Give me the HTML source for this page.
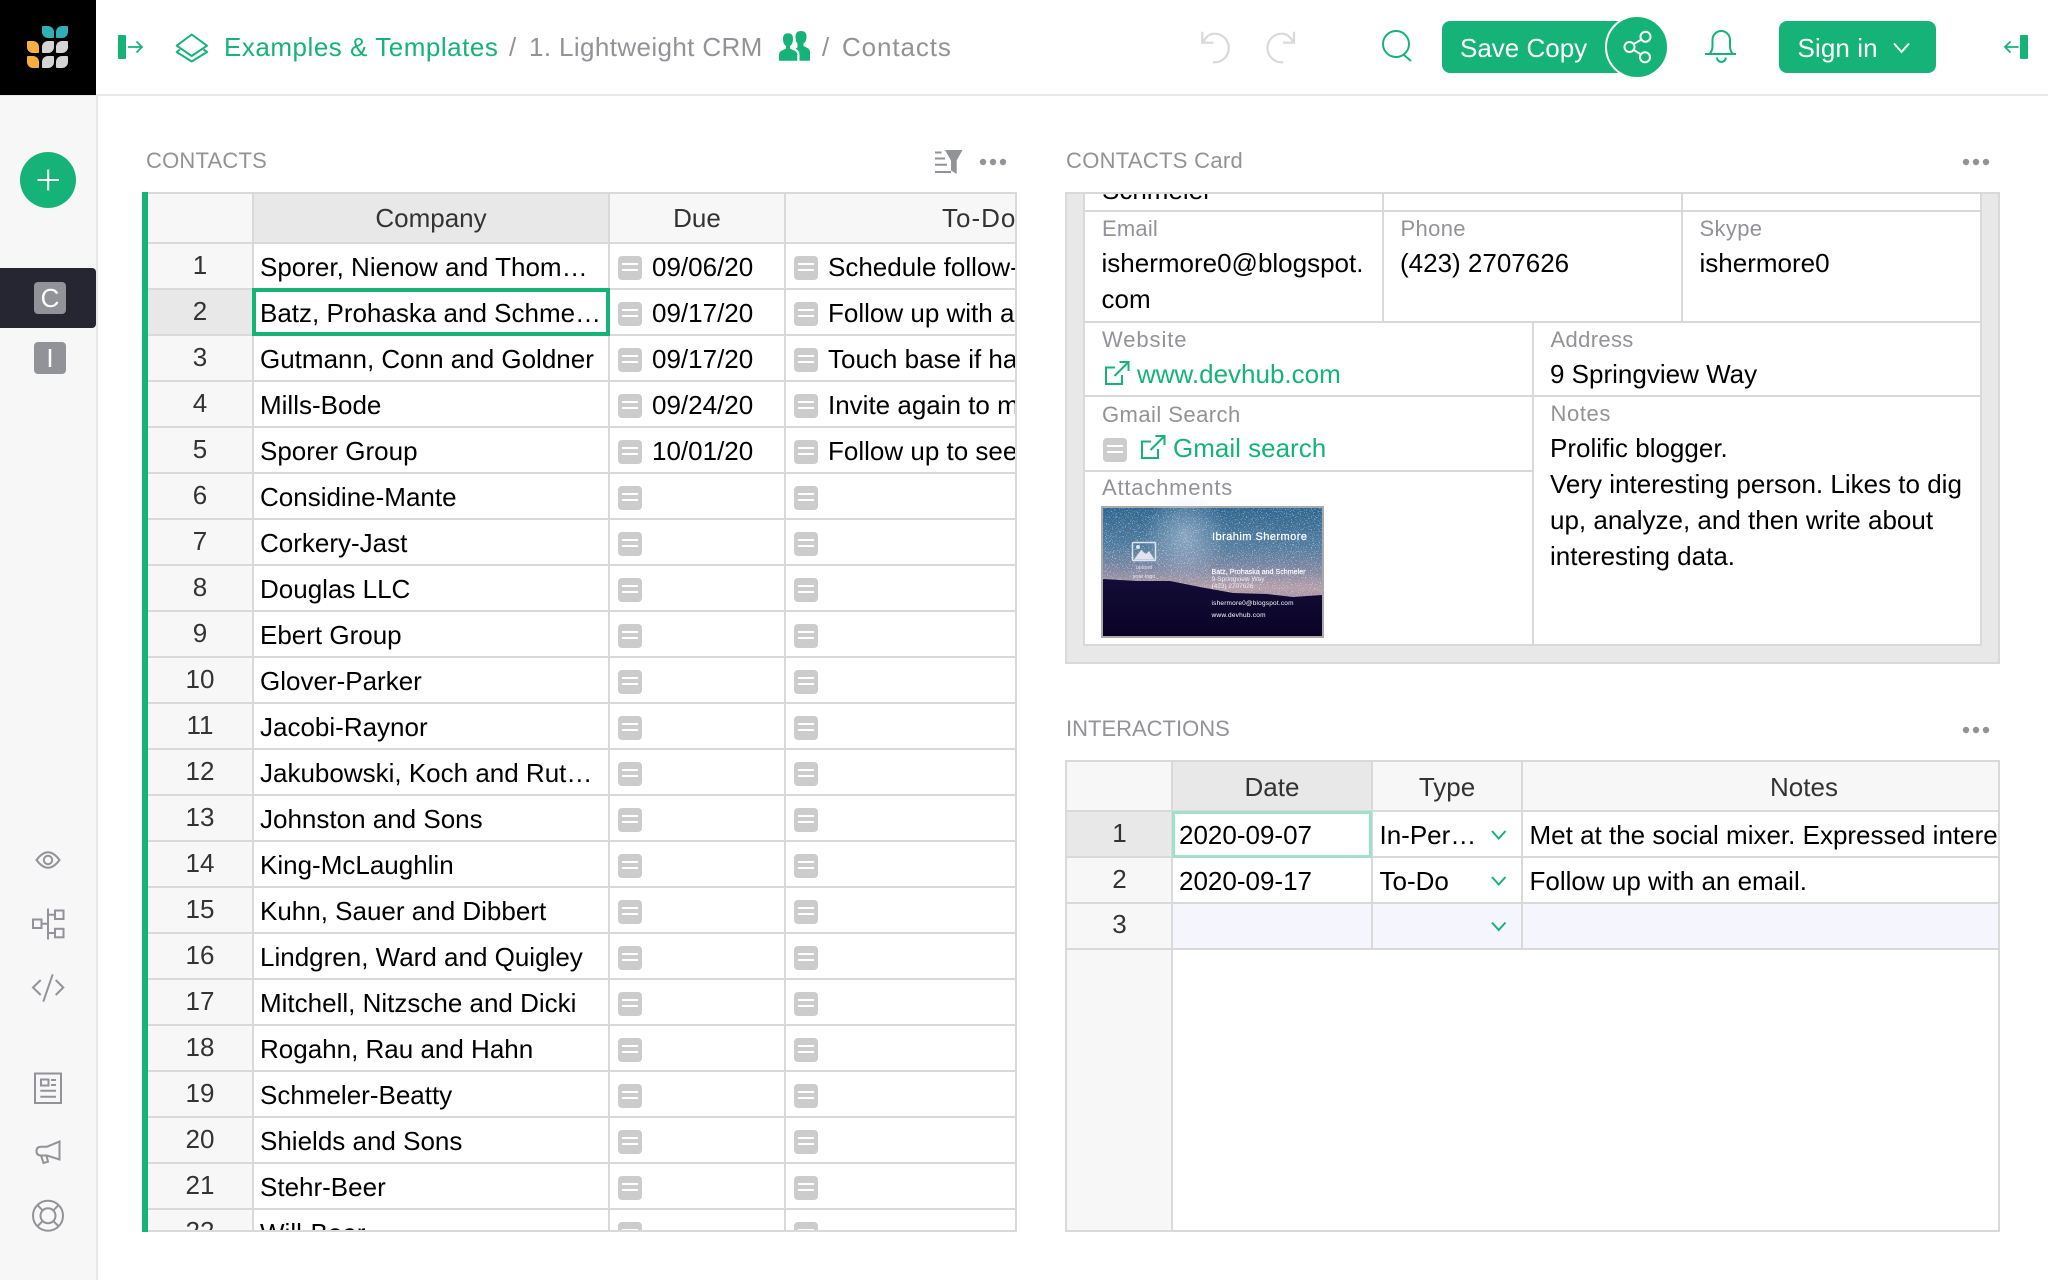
<!DOCTYPE html>
<html lang="en"><head><meta charset="utf-8"><title>Contacts</title>
<style>
*{box-sizing:border-box}
html,body{margin:0;padding:0;width:2048px;height:1280px;overflow:hidden;background:#fff;font-family:"Liberation Sans",Arial,sans-serif;color:#000}
#a{position:absolute;left:0;top:0;width:2048px;height:1280px;overflow:hidden}
.abs,.t,.l,.h,.v{position:absolute}
.t{font-size:26px;line-height:36px;white-space:nowrap}
.g{color:#16b378}.m{color:#929299}
.lb{font-size:22px;color:#929299;letter-spacing:.35px}
.h{background:#d9d9d9;height:2px}
.v{background:#d9d9d9;width:2px}
svg{position:absolute;left:0;top:0;overflow:visible}
#tb{position:absolute;left:148px;top:194px;width:869px;height:1038px;overflow:hidden}
.r{display:block;position:relative;height:46px;width:869px;border-bottom:2px solid #d9d9d9;font-size:26px;line-height:46px;white-space:nowrap}
.r b,.r u,.r i,.hd b,.hd u,.hd i{position:absolute;top:0;bottom:0;font-weight:400;font-style:normal;text-decoration:none;overflow:hidden;display:block}
.r b{left:0;width:106px;background:#f7f7f7;border-right:2px solid #d9d9d9;text-align:center;color:#333;line-height:43px}
.r u{left:106px;width:356px;padding-left:6px;border-right:2px solid #d9d9d9}
.r i.d{left:462px;width:176px;padding-left:42px;border-right:2px solid #d9d9d9}
.r i.e{left:638px;width:229px;padding-left:42px}
.r s{position:absolute;top:12px;left:8px;width:24px;height:24px;border-radius:4px;background:linear-gradient(#fff,#fff) center 7px/16px 2px no-repeat,linear-gradient(#fff,#fff) center 13px/16px 2px no-repeat,#ccc}
.r i.e s{left:8px}
.w{position:absolute;width:24px;height:24px;border-radius:4px;background:linear-gradient(#fff,#fff) center 7px/16px 2px no-repeat,linear-gradient(#fff,#fff) center 13px/16px 2px no-repeat,#ccc}
.hd{position:relative;height:50px;width:869px;background:#f7f7f7;border-bottom:2px solid #d9d9d9;font-size:26px;line-height:49px;color:#333;white-space:nowrap}
.hd b{left:0;width:106px;border-right:2px solid #d9d9d9}
.hd u{left:106px;width:356px;background:#e8e8e8;border-right:2px solid #d9d9d9;text-align:center}
.hd i.d{left:462px;width:176px;border-right:2px solid #d9d9d9;text-align:center}
.hd i.e{left:794px;letter-spacing:1px}
.lg{position:absolute;width:12px;height:12px}
</style></head><body><div id="a">

<!-- chrome -->
<div class="abs" style="left:0;top:95px;width:96px;height:1185px;background:#f7f7f7"></div>
<div class="abs" style="left:96px;top:95px;width:2px;height:1185px;background:#e8e8e8"></div>
<div class="abs" style="left:0;top:94px;width:2048px;height:2px;background:#e8e8e8"></div>
<div class="abs" style="left:0;top:0;width:96px;height:95px;background:#000"></div>
<div class="lg" style="left:41.5px;top:26px;background:#2fb0b5;border-radius:1px 6px 1px 6px"></div>
<div class="lg" style="left:56px;top:26px;background:#2fb0b5;border-radius:6px 1px 6px 1px"></div>
<div class="lg" style="left:27px;top:41px;background:#f9ae41;border-radius:1px 6px 1px 6px"></div>
<div class="lg" style="left:41.5px;top:41px;background:#d5d5d5;border-radius:6px 1px 6px 1px"></div>
<div class="lg" style="left:56px;top:41px;background:#d5d5d5;border-radius:6px 1px 6px 1px"></div>
<div class="lg" style="left:27px;top:55.5px;background:#f9ae41;border-radius:1px 6px 1px 6px"></div>
<div class="lg" style="left:41.5px;top:55.5px;background:#d5d5d5;border-radius:6px 1px 6px 1px"></div>
<div class="lg" style="left:56px;top:55.5px;background:#d5d5d5;border-radius:6px 1px 6px 1px"></div>

<div class="abs" style="left:20px;top:152px;width:56px;height:56px;border-radius:50%;background:#16b378"></div>
<div class="abs" style="left:0;top:268px;width:96px;height:60px;background:#262633;border-radius:0 4px 4px 0"></div>
<div class="abs" style="left:34px;top:282px;width:32px;height:32px;background:#929299;border-radius:4px"></div>
<div class="abs" style="left:34px;top:342px;width:32px;height:32px;background:#929299;border-radius:4px"></div>
<div class="t" style="left:34px;width:32px;text-align:center;top:280px;color:#fff">C</div>
<div class="t" style="left:34px;width:32px;text-align:center;top:340px;color:#fff">I</div>

<svg width="2048" height="1280" viewBox="0 0 2048 1280" fill="none">
 <!-- plus -->
 <path d="M37.5 180H59M48.2 169.5V190.5" stroke="#fff" stroke-width="2"/>
 <!-- header left -->
 <rect x="118" y="35" width="8" height="24" rx="1" fill="#16b378"/>
 <path d="M128 47H141.5M136.5 41.5L142 47L136.5 52.5" stroke="#16b378" stroke-width="1.8"/>
 <path d="M191.7 34.5L207 45.7L191.7 56L176.7 45.7Z" stroke="#16b378" stroke-width="2" stroke-linejoin="round"/>
 <path d="M180 49.5L176.7 52L191.7 61.5L207 52L203.5 49.5" stroke="#16b378" stroke-width="2" stroke-linejoin="round"/>
 <!-- people -->
 <path d="M779 60.7V54.5Q779 51.5 783 50L786 48.5V46Q783 44 783 39Q783 33.3 788 33.3Q793 33.3 793 39Q793 44 790 46V48.5L793 50Q797.3 51.5 797.3 54.5V60.7Z" fill="#16b378"/>
 <path d="M795.5 36.5Q795.5 31 801 31Q806.5 31 806.5 36.5Q806.5 41.5 803.5 43.5V46L806.5 47.5Q810 49 810 52V60.7H799.5V54.5Q799.5 50.5 795.5 48.5L797.5 47.5V43.5Q795.5 41.5 795.5 36.5Z" fill="#16b378"/>
 <!-- undo / redo -->
 <g stroke="#d9d9d9" stroke-width="2.2">
  <path d="M1202.3 31.7V42.7H1213.3"/>
  <path d="M1203.5 41.5C1206.5 36 1210 33.7 1214.5 33.7A14.3 14.3 0 0 1 1214.5 62.3H1213"/>
  <path d="M1294 31.7V42.7H1283"/>
  <path d="M1292.8 41.5C1289.8 36 1286.3 33.7 1281.8 33.7A14.3 14.3 0 0 0 1281.8 62.3H1283.3"/>
 </g>
 <!-- search -->
 <circle cx="1396" cy="44" r="13" stroke="#16b378" stroke-width="2"/>
 <path d="M1404 55L1411 61" stroke="#16b378" stroke-width="2"/>
 <!-- bell -->
 <path d="M1705 54H1736M1709.5 54Q1712.5 51 1712.5 46V39.8A8.7 8.7 0 0 1 1730 39.8V46Q1730 51 1733 54M1717 57.5A4.4 4.4 0 0 0 1725.8 57.5" stroke="#16b378" stroke-width="2"/>
 <!-- collapse right -->
 <rect x="2020" y="35" width="8" height="24" rx="1" fill="#16b378"/>
 <path d="M2018.5 47H2005.5M2010.5 41.5L2005 47L2010.5 52.5" stroke="#16b378" stroke-width="1.8"/>
 <!-- sidebar icons -->
 <g stroke="#929299" stroke-width="2">
  <path d="M36.5 860Q48 844.5 59.5 860Q48 875.5 36.5 860Z"/>
  <circle cx="48" cy="860" r="4.2"/>
  <rect x="33" y="919.5" width="8.5" height="8.5"/>
  <rect x="55" y="910.5" width="8.5" height="8.5"/>
  <rect x="55" y="928.8" width="8.5" height="8.5"/>
  <path d="M48 908.5V939.5M41.5 923.7H48M48 914.7H55M48 933H55"/>
  <path d="M40.7 980L33 987.5L40.7 995M55.7 980L63.3 987.5L55.7 995M52.7 974.3L43.3 1001.7"/>
  <rect x="35" y="1073.5" width="26" height="29.5"/>
  <rect x="41" y="1079.5" width="7.5" height="6"/>
  <path d="M51 1080H56M51 1085H56M40.3 1090.7H56M40.3 1096.7H56"/>
  <path d="M59.5 1141.5V1159.5L47 1155.5H41Q36.5 1155.5 36.5 1151Q36.5 1146.7 41 1146.7H47Z"/>
  <path d="M41 1155.5L43.5 1163L48 1161.7L46.5 1155.5"/>
  <circle cx="48" cy="1215.7" r="15"/>
  <circle cx="48" cy="1215.7" r="7.5"/>
  <path d="M37.5 1205.2L42.7 1210.4M58.5 1205.2L53.3 1210.4M37.5 1226.2L42.7 1221M58.5 1226.2L53.3 1221"/>
 </g>
 <!-- filter + dots -->
 <path d="M945 150H962.5L956.7 160.5V174L951 170.5V160.5Z" fill="#929299"/>
 <path d="M935 152.5H941.5M935 158.5H945M935 164.7H947M935 172H951" stroke="#929299" stroke-width="2"/>
 <g fill="#929299">
  <circle cx="983" cy="162" r="3.2"/><circle cx="993" cy="162" r="3.2"/><circle cx="1003" cy="162" r="3.2"/>
  <circle cx="1966" cy="162" r="3.2"/><circle cx="1976" cy="162" r="3.2"/><circle cx="1986" cy="162" r="3.2"/>
  <circle cx="1966" cy="730" r="3.2"/><circle cx="1976" cy="730" r="3.2"/><circle cx="1986" cy="730" r="3.2"/>
 </g>
</svg>

<!-- breadcrumbs -->
<div class="t g" style="left:224px;top:29px;letter-spacing:.52px">Examples &amp; Templates</div>
<div class="t m" style="left:509px;top:29px">/</div>
<div class="t m" style="left:529px;top:29px;letter-spacing:.38px">1. Lightweight CRM</div>
<div class="t m" style="left:822px;top:29px">/</div>
<div class="t m" style="left:842px;top:29px;letter-spacing:.9px">Contacts</div>

<!-- buttons -->
<div class="abs" style="left:1442px;top:21px;width:190px;height:52px;background:#16b378;border-radius:8px"></div>
<div class="t" style="left:1460px;top:30px;color:#fff">Save Copy</div>
<div class="abs" style="left:1605px;top:15px;width:64px;height:64px;border-radius:50%;background:#16b378;border:2px solid #fff"></div>
<div class="abs" style="left:1779px;top:21px;width:157px;height:52px;background:#16b378;border-radius:8px"></div>
<div class="t" style="left:1797.5px;top:30px;color:#fff;letter-spacing:.1px">Sign in</div>
<svg width="2048" height="1280" viewBox="0 0 2048 1280" fill="none">
 <circle cx="1645.5" cy="36.7" r="5" stroke="#fff" stroke-width="2"/>
 <circle cx="1645" cy="57.3" r="5" stroke="#fff" stroke-width="2"/>
 <circle cx="1629.5" cy="47" r="5" stroke="#fff" stroke-width="2"/>
 <path d="M1633.5 44.2L1641.5 39.5M1633.5 49.8L1641 54.5" stroke="#fff" stroke-width="2"/>
 <path d="M1894 43.5L1901.5 52L1909 43.5" stroke="#fff" stroke-width="2"/>
</svg>

<!-- section titles -->
<div class="t lb" style="left:146px;top:143px;letter-spacing:.2px">CONTACTS</div>
<div class="t lb" style="left:1066px;top:143px;letter-spacing:.3px">CONTACTS Card</div>
<div class="t lb" style="left:1066px;top:711px;letter-spacing:0">INTERACTIONS</div>

<!-- contacts table -->
<div class="abs" style="left:142px;top:192px;width:875px;height:2px;background:#d9d9d9"></div>
<div class="abs" style="left:142px;top:192px;width:6px;height:1040px;background:#16b378"></div>
<div class="abs" style="left:1015px;top:192px;width:2px;height:1040px;background:#d9d9d9;z-index:2"></div>
<div id="tb">
<div class="hd"><b></b><u>Company</u><i class="d">Due</i><i class="e">To-Do</i></div>
<div class="r"><b>1</b><u>Sporer, Nienow and Thom…</u><i class="d"><s></s>09/06/20</i><i class="e"><s></s>Schedule follow-up</i></div>
<div class="r"><b style="background:#e8e8e8">2</b><u>Batz, Prohaska and Schme…</u><i class="d"><s></s>09/17/20</i><i class="e"><s></s>Follow up with an email</i></div>
<div class="r"><b>3</b><u>Gutmann, Conn and Goldner</u><i class="d"><s></s>09/17/20</i><i class="e"><s></s>Touch base if happy</i></div>
<div class="r"><b>4</b><u>Mills-Bode</u><i class="d"><s></s>09/24/20</i><i class="e"><s></s>Invite again to meet</i></div>
<div class="r"><b>5</b><u>Sporer Group</u><i class="d"><s></s>10/01/20</i><i class="e"><s></s>Follow up to see if</i></div>
<div class="r"><b>6</b><u>Considine-Mante</u><i class="d"><s></s></i><i class="e"><s></s></i></div>
<div class="r"><b>7</b><u>Corkery-Jast</u><i class="d"><s></s></i><i class="e"><s></s></i></div>
<div class="r"><b>8</b><u>Douglas LLC</u><i class="d"><s></s></i><i class="e"><s></s></i></div>
<div class="r"><b>9</b><u>Ebert Group</u><i class="d"><s></s></i><i class="e"><s></s></i></div>
<div class="r"><b>10</b><u>Glover-Parker</u><i class="d"><s></s></i><i class="e"><s></s></i></div>
<div class="r"><b>11</b><u>Jacobi-Raynor</u><i class="d"><s></s></i><i class="e"><s></s></i></div>
<div class="r"><b>12</b><u>Jakubowski, Koch and Rut…</u><i class="d"><s></s></i><i class="e"><s></s></i></div>
<div class="r"><b>13</b><u>Johnston and Sons</u><i class="d"><s></s></i><i class="e"><s></s></i></div>
<div class="r"><b>14</b><u>King-McLaughlin</u><i class="d"><s></s></i><i class="e"><s></s></i></div>
<div class="r"><b>15</b><u>Kuhn, Sauer and Dibbert</u><i class="d"><s></s></i><i class="e"><s></s></i></div>
<div class="r"><b>16</b><u>Lindgren, Ward and Quigley</u><i class="d"><s></s></i><i class="e"><s></s></i></div>
<div class="r"><b>17</b><u>Mitchell, Nitzsche and Dicki</u><i class="d"><s></s></i><i class="e"><s></s></i></div>
<div class="r"><b>18</b><u>Rogahn, Rau and Hahn</u><i class="d"><s></s></i><i class="e"><s></s></i></div>
<div class="r"><b>19</b><u>Schmeler-Beatty</u><i class="d"><s></s></i><i class="e"><s></s></i></div>
<div class="r"><b>20</b><u>Shields and Sons</u><i class="d"><s></s></i><i class="e"><s></s></i></div>
<div class="r"><b>21</b><u>Stehr-Beer</u><i class="d"><s></s></i><i class="e"><s></s></i></div>
<div class="r"><b>22</b><u>Will-Beer</u><i class="d"><s></s></i><i class="e"><s></s></i></div>
</div>
<div class="abs" style="left:148px;top:1230px;width:869px;height:2px;background:#d9d9d9"></div>
<div class="abs" style="left:252px;top:288px;width:358px;height:48px;border:4px solid #16b378"></div>

<!-- card -->
<div class="abs" style="left:1065px;top:192px;width:935px;height:472px;background:#e8e8e8;border:2px solid #d9d9d9"></div>
<div class="abs" style="left:1084px;top:194px;width:897px;height:451px;background:#fff"></div>
<div class="v" style="left:1083px;top:194px;height:452px"></div>
<div class="v" style="left:1980px;top:194px;height:452px"></div>
<div class="h" style="left:1084px;top:210px;width:897px"></div>
<div class="h" style="left:1084px;top:321px;width:897px"></div>
<div class="h" style="left:1084px;top:395px;width:897px"></div>
<div class="h" style="left:1084px;top:470px;width:449px"></div>
<div class="h" style="left:1084px;top:644px;width:897px"></div>
<div class="v" style="left:1382px;top:194px;height:128px"></div>
<div class="v" style="left:1681px;top:194px;height:128px"></div>
<div class="v" style="left:1532px;top:322px;height:323px"></div>
<div class="abs" style="left:1084px;top:194px;width:290px;height:16px;overflow:hidden"><div class="t" style="left:18px;top:-22px">Schmeler</div></div>

<div class="t lb" style="left:1102px;top:211px;letter-spacing:.2px">Email</div>
<div class="t" style="left:1101.5px;top:245px">ishermore0@blogspot.</div>
<div class="t" style="left:1101.5px;top:281px">com</div>
<div class="t lb" style="left:1400.5px;top:211px">Phone</div>
<div class="t" style="left:1400px;top:245px">(423) 2707626</div>
<div class="t lb" style="left:1699.5px;top:211px">Skype</div>
<div class="t" style="left:1699.5px;top:245px">ishermore0</div>

<div class="t lb" style="left:1102px;top:322px;letter-spacing:.9px">Website</div>
<div class="t g" style="left:1137px;top:356px">www.devhub.com</div>
<div class="t lb" style="left:1550.5px;top:322px">Address</div>
<div class="t" style="left:1550px;top:356px">9 Springview Way</div>
<div class="t lb" style="left:1102px;top:397px;letter-spacing:.45px">Gmail Search</div>
<div class="w" style="left:1103px;top:438px"></div>
<div class="t g" style="left:1173px;top:430px">Gmail search</div>
<div class="t lb" style="left:1550.5px;top:396px;letter-spacing:.6px">Notes</div>
<div class="t" style="left:1550px;top:430px">Prolific blogger.</div>
<div class="t" style="left:1550px;top:466px">Very interesting person. Likes to dig</div>
<div class="t" style="left:1550px;top:502px">up, analyze, and then write about</div>
<div class="t" style="left:1550px;top:538px">interesting data.</div>
<div class="t lb" style="left:1102px;top:470px;letter-spacing:.8px">Attachments</div>
<svg width="2048" height="1280" viewBox="0 0 2048 1280" fill="none">
 <g stroke="#16b378" stroke-width="2">
  <path d="M1115 367.5H1106V384H1122V375M1114.5 376L1127.5 363M1119.5 362H1128.5V371"/>
  <path d="M1151 441.5H1142V458H1158V449M1150.5 450L1163.5 437M1155.5 436H1164.5V445"/>
 </g>
</svg>

<!-- attachment image -->
<svg style="left:1101px;top:506px" width="223" height="132" viewBox="-2 -2 223 132" fill="none">
 <defs>
  <linearGradient id="sky" x1="0" y1="0" x2="0" y2="1"><stop offset="0" stop-color="#2f6690"/><stop offset=".3" stop-color="#527c9f"/><stop offset=".48" stop-color="#8088a4"/><stop offset=".62" stop-color="#b39ea9"/><stop offset=".7" stop-color="#a893a8"/></linearGradient>
  <linearGradient id="gnd" x1="0" y1="0" x2="0" y2="1"><stop offset="0" stop-color="#120c38"/><stop offset="1" stop-color="#0b0326"/></linearGradient>
  <radialGradient id="mw" cx=".5" cy=".5" r=".5"><stop offset="0" stop-color="#c9d4e6" stop-opacity=".5"/><stop offset="1" stop-color="#c9d4e6" stop-opacity="0"/></radialGradient>
  <filter id="nz" x="0" y="0" width="100%" height="100%">
   <feTurbulence type="fractalNoise" baseFrequency=".85" numOctaves="2" seed="7"/>
   <feColorMatrix values="0 0 0 0 1 0 0 0 0 1 0 0 0 0 1 7 0 0 0 -4.1"/>
  </filter>
 </defs>
 <rect x="-1" y="-1" width="221" height="130" stroke="#aaa" stroke-width="2"/>
 <rect width="219" height="128" fill="url(#sky)"/>
 <ellipse cx="82" cy="28" rx="42" ry="46" fill="url(#mw)"/>
 <rect width="219" height="90" filter="url(#nz)" opacity=".55"/>
 <path d="M0 71L34 73L67 73L97 79L130 85L164 86L190 89L219 87V128H0Z" fill="url(#gnd)"/>
 <rect x="29.500" y="34.500" width="23" height="18" rx="1" stroke="#dfe4ee" stroke-width="1.500"/>
 <path d="M31 51.500L38 42L43 46L46 43L51.500 51.500Z" fill="#dfe4ee"/>
 <circle cx="35" cy="39" r="2" fill="#dfe4ee"/>
 <g font-family="Liberation Sans,Arial,sans-serif" fill="#fff">
  <text x="109" y="32" font-size="11" textLength="95" stroke="#fff" stroke-width=".2">Ibrahim Shermore</text>
  <text x="108.500" y="66" font-size="7" textLength="94" stroke="#fff" stroke-width=".15">Batz, Prohaska and Schmeler</text>
  <text x="108.500" y="73" font-size="6.500" textLength="53" opacity=".85">9 Springview Way</text>
  <text x="108.500" y="80" font-size="6.500" textLength="42" opacity=".8">(423) 2707626</text>
  <text x="108.500" y="97" font-size="6.500" textLength="82">ishermore0@blogspot.com</text>
  <text x="108.500" y="109" font-size="6.500" textLength="54">www.devhub.com</text>
  <text x="41" y="61" font-size="5.500" text-anchor="middle" opacity=".7">upload</text>
  <text x="41" y="70" font-size="5.500" text-anchor="middle" opacity=".8">your logo</text>
 </g>
</svg>

<!-- interactions -->
<div class="abs" style="left:1065px;top:760px;width:935px;height:472px;background:#fff;border:2px solid #d9d9d9"></div>
<div class="abs" style="left:1067px;top:762px;width:105px;height:468px;background:#f7f7f7"></div>
<div class="abs" style="left:1067px;top:762px;width:931px;height:48px;background:#f7f7f7"></div>
<div class="abs" style="left:1172px;top:762px;width:200px;height:48px;background:#e8e8e8"></div>
<div class="abs" style="left:1067px;top:812px;width:105px;height:45px;background:#e8e8e8"></div>
<div class="abs" style="left:1172px;top:903px;width:826px;height:45px;background:#f5f6fd"></div>
<div class="h" style="left:1067px;top:810px;width:931px"></div>
<div class="h" style="left:1067px;top:856px;width:931px"></div>
<div class="h" style="left:1067px;top:902px;width:931px"></div>
<div class="h" style="left:1067px;top:948px;width:931px"></div>
<div class="v" style="left:1171px;top:762px;height:468px"></div>
<div class="v" style="left:1371px;top:762px;height:187px"></div>
<div class="v" style="left:1521px;top:762px;height:187px"></div>
<div class="abs" style="left:1172px;top:811px;width:200px;height:47px;border:3px solid #a0e1c9"></div>

<div class="t" style="left:1172px;width:200px;text-align:center;top:769px;color:#333">Date</div>
<div class="t" style="left:1372px;width:150px;text-align:center;top:769px;color:#333">Type</div>
<div class="t" style="left:1700px;width:208px;text-align:center;top:769px;color:#333">Notes</div>
<div class="t" style="left:1067px;width:105px;text-align:center;top:815px;color:#333">1</div>
<div class="t" style="left:1067px;width:105px;text-align:center;top:861px;color:#333">2</div>
<div class="t" style="left:1067px;width:105px;text-align:center;top:906px;color:#333">3</div>
<div class="t" style="left:1179px;top:817px">2020-09-07</div>
<div class="t" style="left:1179px;top:863px">2020-09-17</div>
<div class="t" style="left:1379.5px;top:817px">In-Per…</div>
<div class="t" style="left:1379.5px;top:863px">To-Do</div>
<div class="abs" style="left:1523px;top:812px;width:475px;height:44px;overflow:hidden"><div class="t" style="left:6.5px;top:5px">Met at the social mixer. Expressed interest in learning more.</div></div>
<div class="t" style="left:1529.5px;top:863px">Follow up with an email.</div>
<svg width="2048" height="1280" viewBox="0 0 2048 1280" fill="none">
 <path d="M1492 831L1498.700 838.500L1505.500 831M1492 877L1498.700 884.500L1505.500 877M1492 922.500L1498.700 930L1505.500 922.500" stroke="#16b378" stroke-width="2"/>
</svg>

</div></body></html>
